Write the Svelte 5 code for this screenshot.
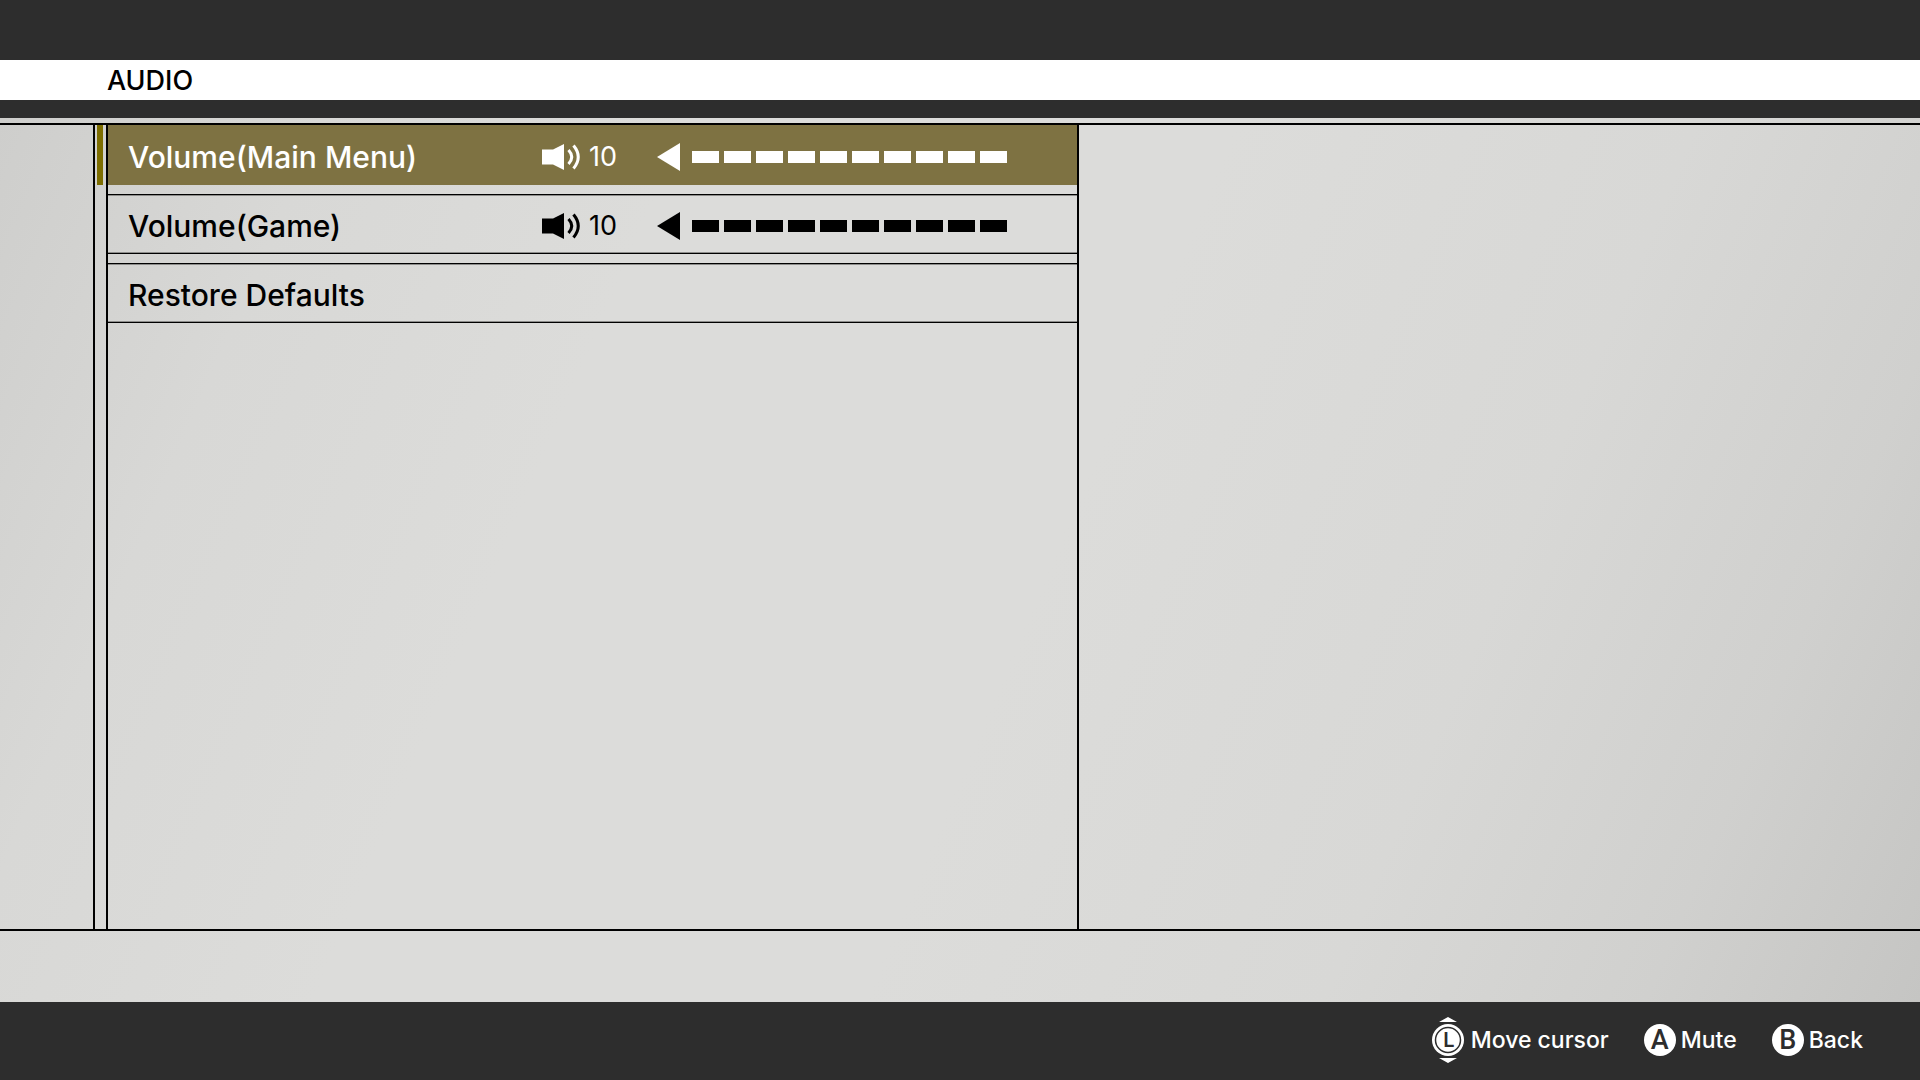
<script>
  let rows = $state([
    { id: 'main', label: 'Volume(Main Menu)', volume: 10 },
    { id: 'game', label: 'Volume(Game)', volume: 10 },
    { id: 'reset', label: 'Restore Defaults' }
  ]);
  let selected = $state('main');

  function lower(row) {
    row.volume = Math.max(0, row.volume - 1);
  }

  function restore() {
    for (const row of rows) {
      if (row.volume !== undefined) row.volume = 10;
    }
  }

  function mute() {
    for (const row of rows) {
      if (row.id === selected && row.volume !== undefined) row.volume = 0;
    }
  }
</script>

<div class="screen">
  <header>
    <h1>AUDIO</h1>
  </header>

  <main>
    <div class="columns">
      <div class="rail">
        <div class="marker"></div>
      </div>
      <div class="list">
        {#each rows as row (row.id)}
          {#if row.volume !== undefined}
            <div
              class="row"
              class:active={selected === row.id}
              role="group"
              aria-label={row.label}
              onpointerenter={() => (selected = row.id)}
            >
              <label for="volume-{row.id}">{row.label}</label>
              <svg class="speaker" viewBox="0 0 38 28" aria-hidden="true">
                <path d="M0 6.500H11L22 1V27L11 21.500H0Z" fill="currentColor" />
                <path
                  d="M26.500 7Q33 14 26.500 21M31.500 2.500Q41 14 31.500 25.500"
                  fill="none"
                  stroke="currentColor"
                  stroke-width="3"
                />
              </svg>
              <output for="volume-{row.id}">{row.volume}</output>
              <button class="arrow" aria-label="Lower volume" onclick={() => lower(row)}>
                <svg viewBox="0 0 23 28" aria-hidden="true">
                  <path d="M0 14L23 0V28Z" fill="currentColor" />
                </svg>
              </button>
              <div class="meter">
                <input
                  id="volume-{row.id}"
                  type="range"
                  min="0"
                  max="10"
                  bind:value={row.volume}
                  style:--level="{row.volume * 10}%"
                />
              </div>
            </div>
          {:else}
            <button
              class="row"
              class:active={selected === row.id}
              onpointerenter={() => (selected = row.id)}
              onclick={restore}>{row.label}</button
            >
          {/if}
        {/each}
      </div>
    </div>
  </main>

  <footer>
    <div class="hint stick">
      <svg viewBox="0 0 32 48" aria-hidden="true">
        <path d="M16 1L25 6H7Z M16 47L25 42H7Z" fill="#fff" />
        <circle cx="16" cy="24" r="16" fill="#fff" />
        <circle cx="16" cy="24" r="12.500" fill="none" stroke="#2d2d2d" stroke-width="1.500" />
        <text x="17" y="31" text-anchor="middle">L</text>
      </svg>
      <span>Move cursor</span>
    </div>
    <button class="hint" onclick={mute}>
      <span class="key">A</span>
      <span>Mute</span>
    </button>
    <button class="hint">
      <span class="key">B</span>
      <span>Back</span>
    </button>
  </footer>
</div>

<style>
  :global(body) {
    margin: 0;
    background: #2d2d2d;
  }

  .screen {
    display: flex;
    flex-direction: column;
    min-height: 100vh;
    font-family: Inter, 'Liberation Sans', sans-serif;
    font-weight: 500;
    color: #000;
  }

  button {
    border: 0;
    padding: 0;
    background: none;
    color: inherit;
    font: inherit;
    text-align: left;
  }

  header {
    padding: 60px 0 18px;
    background: #2d2d2d;
  }

  h1 {
    margin: 0;
    padding: 2px 107px 0;
    background: #fff;
    font-size: 27px;
    line-height: 38px;
    font-weight: 500;
  }

  main {
    flex: 1;
    display: flex;
    flex-direction: column;
    padding: 5px 0 71px;
    background: linear-gradient(113deg, #cececc 0%, #d8d8d6 14%, #dcdcda 30%, #dcdcda 54%, #d8d8d6 74%, #d0d0ce 88%, #c5c5c3 100%);
  }

  .columns {
    flex: 1;
    display: grid;
    grid-template-columns: 108px minmax(0, 971fr) minmax(0, 841fr);
    border-top: 2px solid #000;
    border-bottom: 2px solid #000;
  }

  .rail {
    box-sizing: border-box;
    margin-left: 93px;
    padding-left: 2px;
    border-left: 2px solid #000;
    border-right: 2px solid #000;
  }

  .marker {
    width: 6px;
    height: 60px;
    background: #7d6e00;
  }

  .list {
    display: flex;
    flex-direction: column;
    gap: 9px;
    border-right: 2px solid #000;
  }

  .row {
    box-sizing: border-box;
    display: flex;
    align-items: center;
    height: 60px;
    padding: 3px 70px 0 20px;
    font-size: 30px;
    line-height: 40px;
    box-shadow:
      inset 0 1px #000,
      inset 0 -1px #000,
      inset 0 2px #8d8d8b,
      inset 0 -2px #8d8d8b;
  }

  .row.active {
    background: #7e7242;
    color: #fff;
    box-shadow: none;
  }

  label {
    flex: 1;
  }

  .speaker {
    width: 38px;
    height: 28px;
    margin-right: 9px;
  }

  output {
    width: 68px;
    font-size: 27px;
    font-weight: 400;
  }

  .arrow {
    display: flex;
    margin-right: 12px;
  }

  .arrow svg {
    width: 23px;
    height: 28px;
  }

  .meter {
    display: flex;
    width: 315px;
  }

  /* Ten 27px segments with 5px between them, cut off at the current level */
  input {
    appearance: none;
    width: 100%;
    height: 12px;
    margin: 0;
    background: currentColor;
    color: inherit;
    mask:
      linear-gradient(90deg, #000 var(--level), transparent var(--level)),
      repeating-linear-gradient(90deg, #000 0 27px, transparent 27px 32px);
    mask-composite: intersect;
  }

  input::-webkit-slider-thumb {
    appearance: none;
    width: 1px;
    height: 12px;
    background: transparent;
  }

  footer {
    box-sizing: border-box;
    display: flex;
    align-items: center;
    justify-content: flex-end;
    gap: 35px;
    height: 78px;
    padding: 0 57px 2px 0;
    background: #2d2d2d;
    color: #fff;
    font-size: 23px;
    line-height: 32px;
  }

  .hint {
    display: flex;
    align-items: center;
    gap: 5px;
  }

  .stick {
    gap: 7px;
  }

  .stick svg {
    width: 32px;
    height: 48px;
  }

  text {
    font-size: 20px;
    font-weight: 600;
    fill: #2d2d2d;
  }

  .key {
    width: 32px;
    height: 32px;
    border-radius: 50%;
    background: #fff;
    color: #2d2d2d;
    font-family: Roboto, 'Liberation Sans', sans-serif;
    font-size: 27px;
    text-align: center;
  }
</style>
